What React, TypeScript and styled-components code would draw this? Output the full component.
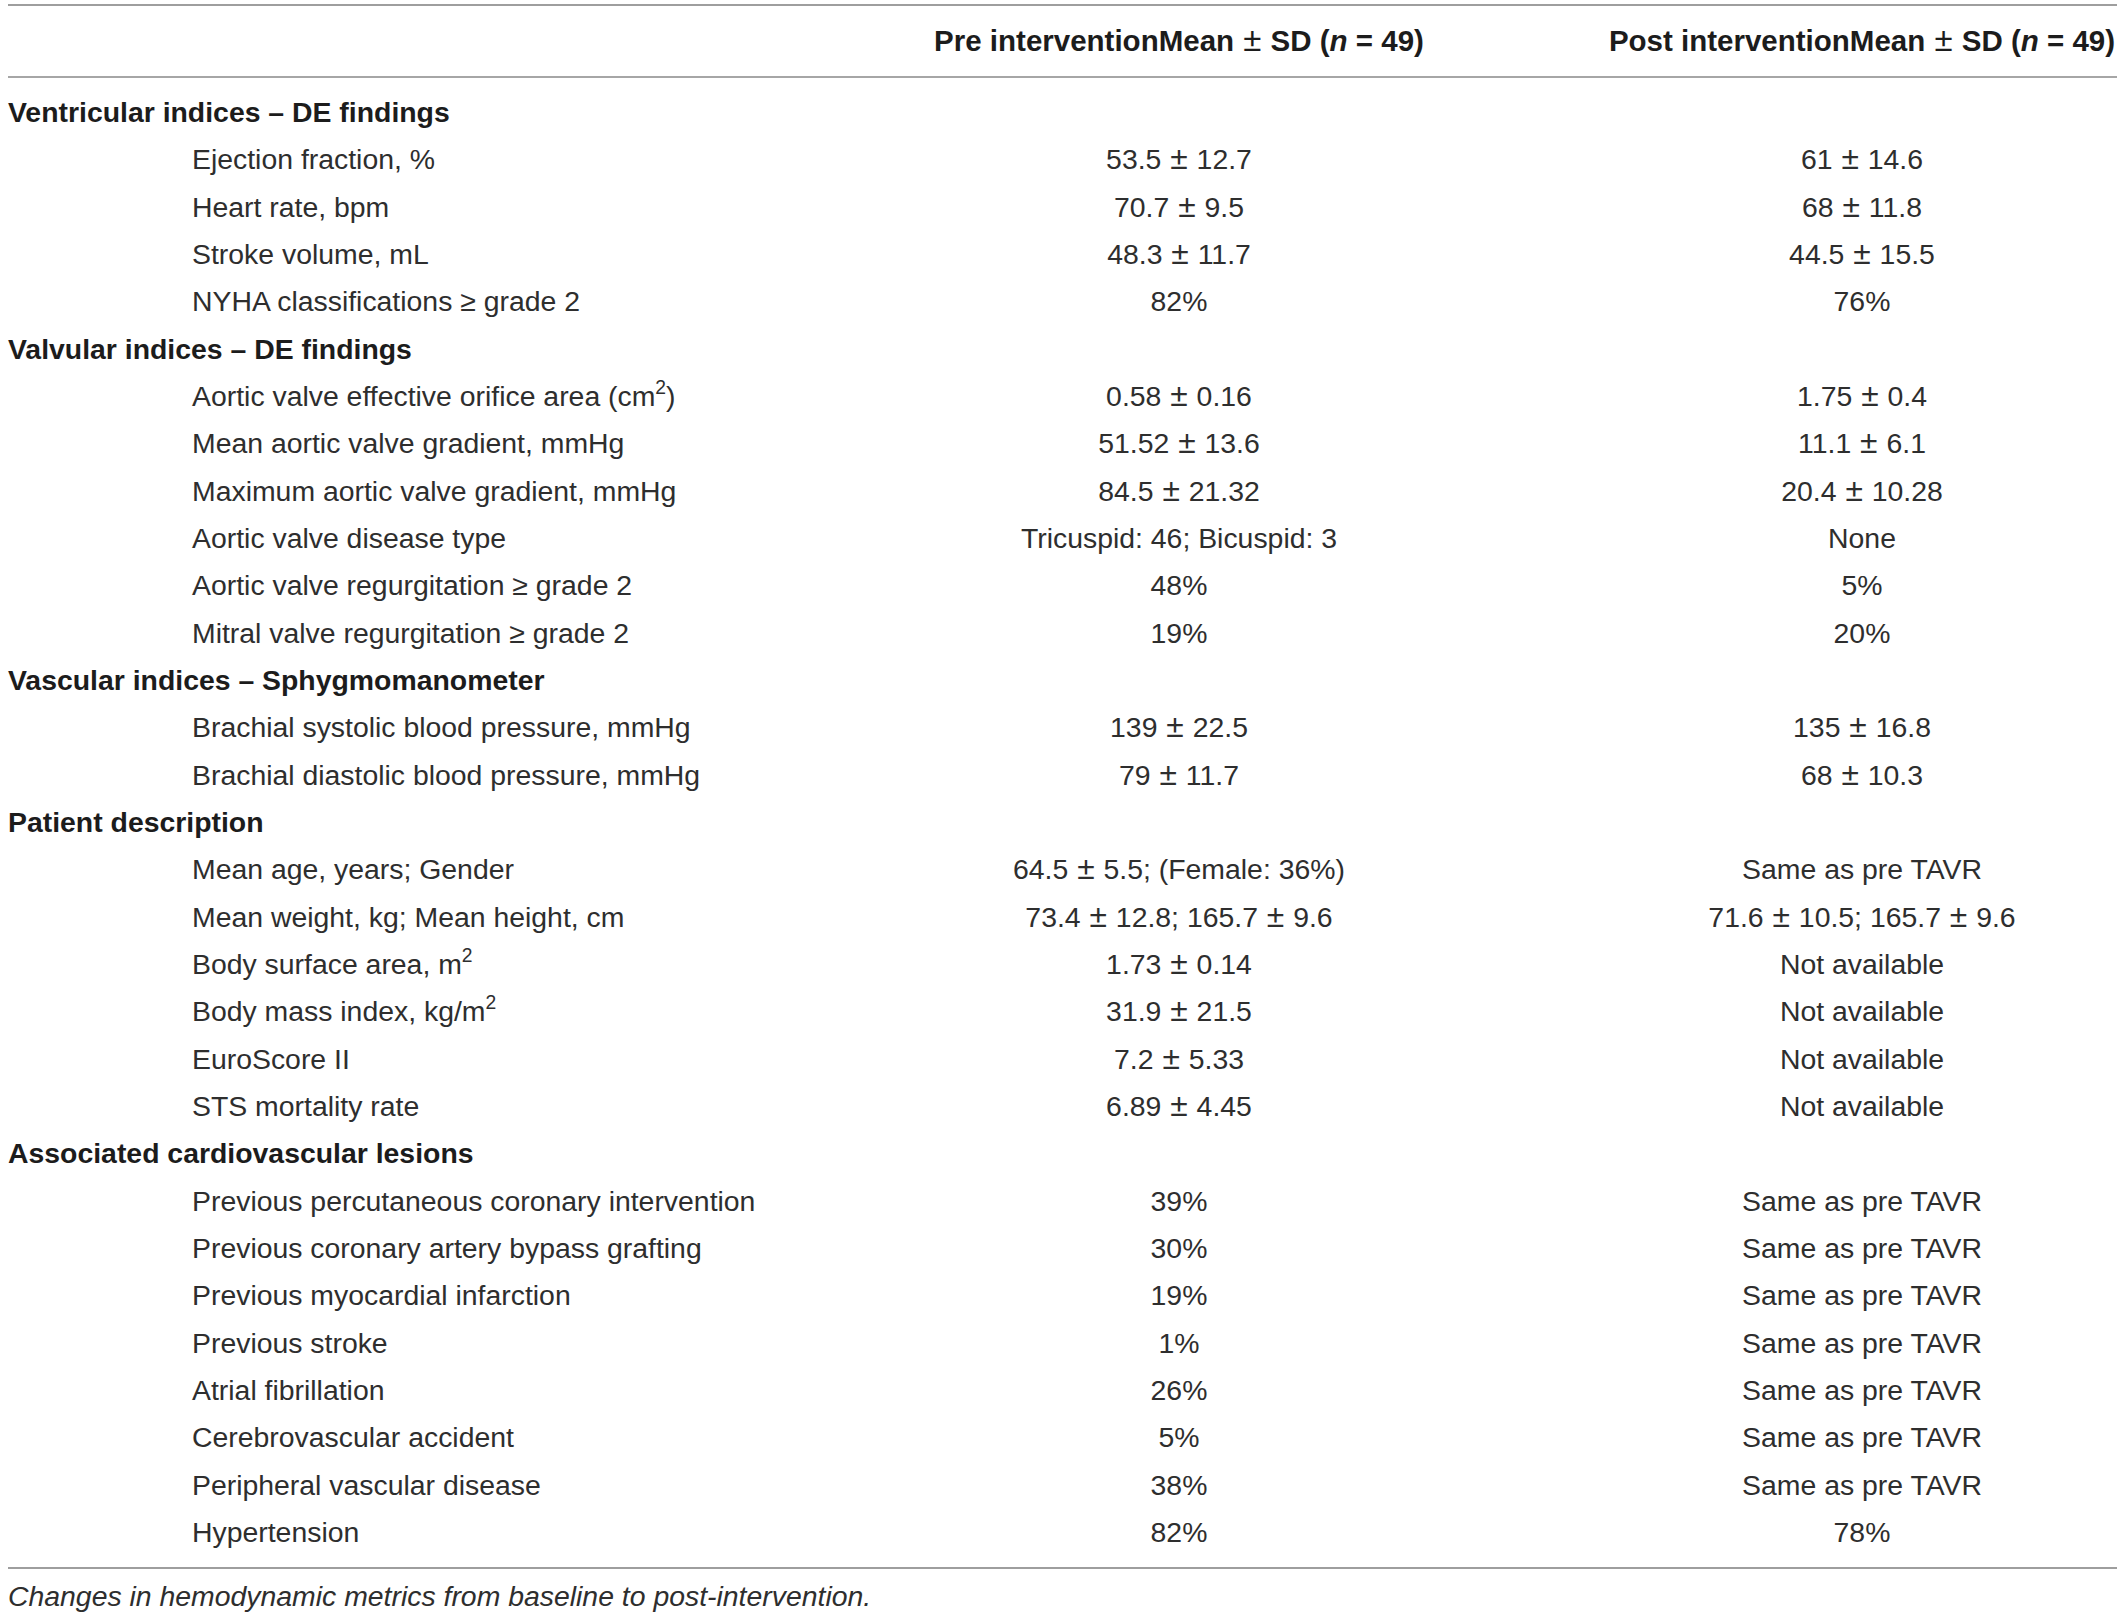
import React from "react";
import styled, { createGlobalStyle } from "styled-components";

const GlobalStyle = createGlobalStyle`
  html, body {
    margin: 0;
    padding: 0;
    background: #ffffff;
  }
  body {
    font-family: "Liberation Sans", Arial, sans-serif;
    color: #2e2e2e;
  }
`;

const Page = styled.div`
  padding: 4px 5px 0 8px;
  width: 2109px;
`;

const Table = styled.div`
  border-top: 2px solid #9e9e9e;
  border-bottom: 2px solid #9e9e9e;
`;

const HeadRow = styled.div`
  display: grid;
  grid-template-columns: 743px 856px 510px;
  height: 70px;
  align-items: center;
  border-bottom: 2px solid #a6a6a6;
`;

const HeadCell = styled.div`
  font-size: 29.5px;
  font-weight: 700;
  color: #1c1c1c;
  text-align: center;
  white-space: nowrap;
`;

const Body = styled.div`
  padding: 11px 0 10.5px;
`;

const Row = styled.div`
  display: grid;
  grid-template-columns: 743px 856px 510px;
  height: 47.33px;
  align-items: center;
  line-height: 47.33px;
`;

const LabelCell = styled.div<{ $section?: boolean }>`
  font-size: 28.4px;
  white-space: nowrap;
  padding-left: ${(p) => (p.$section ? "0" : "184px")};
  font-weight: ${(p) => (p.$section ? 700 : 400)};
  color: ${(p) => (p.$section ? "#1c1c1c" : "#2e2e2e")};
`;

const ValueCell = styled.div`
  font-size: 28.4px;
  text-align: center;
  white-space: nowrap;
  color: #2e2e2e;
`;

const Pm = styled.span`
  display: inline-block;
  font-size: 1.12em;
  line-height: 0;
  margin: 0 1px;
  font-weight: 400;
`;

const Sup = styled.sup`
  font-size: 0.68em;
  line-height: 0;
  vertical-align: 0.6em;
`;

const Caption = styled.p`
  margin: 8px 0 0;
  font-size: 28.4px;
  line-height: 38px;
  font-style: italic;
  color: #2e2e2e;
`;

function withPm(text?: string): React.ReactNode {
  if (!text) return "";
  const parts = text.split("±");
  return parts.map((p, i) => (
    <React.Fragment key={i}>
      {i > 0 && <Pm>±</Pm>}
      {p}
    </React.Fragment>
  ));
}

type Item = {
  label: React.ReactNode;
  pre?: string;
  post?: string;
  section?: boolean;
};

const rows: Item[] = [
  { label: "Ventricular indices – DE findings", section: true },
  { label: "Ejection fraction, %", pre: "53.5 ± 12.7", post: "61 ± 14.6" },
  { label: "Heart rate, bpm", pre: "70.7 ± 9.5", post: "68 ± 11.8" },
  { label: "Stroke volume, mL", pre: "48.3 ± 11.7", post: "44.5 ± 15.5" },
  { label: "NYHA classifications ≥ grade 2", pre: "82%", post: "76%" },
  { label: "Valvular indices – DE findings", section: true },
  {
    label: (
      <>
        Aortic valve effective orifice area (cm<Sup>2</Sup>)
      </>
    ),
    pre: "0.58 ± 0.16",
    post: "1.75 ± 0.4",
  },
  { label: "Mean aortic valve gradient, mmHg", pre: "51.52 ± 13.6", post: "11.1 ± 6.1" },
  { label: "Maximum aortic valve gradient, mmHg", pre: "84.5 ± 21.32", post: "20.4 ± 10.28" },
  { label: "Aortic valve disease type", pre: "Tricuspid: 46; Bicuspid: 3", post: "None" },
  { label: "Aortic valve regurgitation ≥ grade 2", pre: "48%", post: "5%" },
  { label: "Mitral valve regurgitation ≥ grade 2", pre: "19%", post: "20%" },
  { label: "Vascular indices – Sphygmomanometer", section: true },
  { label: "Brachial systolic blood pressure, mmHg", pre: "139 ± 22.5", post: "135 ± 16.8" },
  { label: "Brachial diastolic blood pressure, mmHg", pre: "79 ± 11.7", post: "68 ± 10.3" },
  { label: "Patient description", section: true },
  { label: "Mean age, years; Gender", pre: "64.5 ± 5.5; (Female: 36%)", post: "Same as pre TAVR" },
  {
    label: "Mean weight, kg; Mean height, cm",
    pre: "73.4 ± 12.8; 165.7 ± 9.6",
    post: "71.6 ± 10.5; 165.7 ± 9.6",
  },
  {
    label: (
      <>
        Body surface area, m<Sup>2</Sup>
      </>
    ),
    pre: "1.73 ± 0.14",
    post: "Not available",
  },
  {
    label: (
      <>
        Body mass index, kg/m<Sup>2</Sup>
      </>
    ),
    pre: "31.9 ± 21.5",
    post: "Not available",
  },
  { label: "EuroScore II", pre: "7.2 ± 5.33", post: "Not available" },
  { label: "STS mortality rate", pre: "6.89 ± 4.45", post: "Not available" },
  { label: "Associated cardiovascular lesions", section: true },
  { label: "Previous percutaneous coronary intervention", pre: "39%", post: "Same as pre TAVR" },
  { label: "Previous coronary artery bypass grafting", pre: "30%", post: "Same as pre TAVR" },
  { label: "Previous myocardial infarction", pre: "19%", post: "Same as pre TAVR" },
  { label: "Previous stroke", pre: "1%", post: "Same as pre TAVR" },
  { label: "Atrial fibrillation", pre: "26%", post: "Same as pre TAVR" },
  { label: "Cerebrovascular accident", pre: "5%", post: "Same as pre TAVR" },
  { label: "Peripheral vascular disease", pre: "38%", post: "Same as pre TAVR" },
  { label: "Hypertension", pre: "82%", post: "78%" },
];

export default function App() {
  return (
    <>
      <GlobalStyle />
      <Page>
        <Table>
          <HeadRow>
            <HeadCell />
            <HeadCell>
              Pre interventionMean <Pm>±</Pm> SD (<i>n</i> = 49)
            </HeadCell>
            <HeadCell>
              Post interventionMean <Pm>±</Pm> SD (<i>n</i> = 49)
            </HeadCell>
          </HeadRow>
          <Body>
            {rows.map((r, i) => (
              <Row key={i}>
                <LabelCell $section={r.section}>{r.label}</LabelCell>
                <ValueCell>{withPm(r.pre)}</ValueCell>
                <ValueCell>{withPm(r.post)}</ValueCell>
              </Row>
            ))}
          </Body>
        </Table>
        <Caption>Changes in hemodynamic metrics from baseline to post-intervention.</Caption>
      </Page>
    </>
  );
}
